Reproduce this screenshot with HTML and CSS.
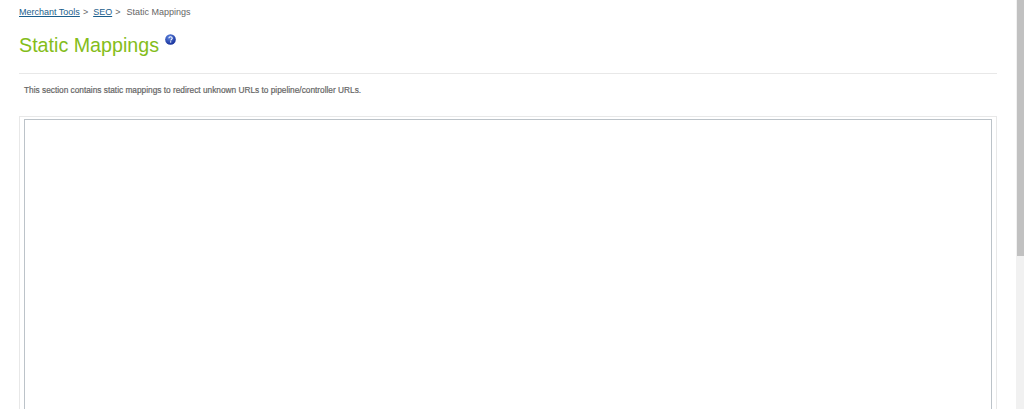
FILE: index.html
```html
<!DOCTYPE html>
<html lang="en">
<head>
<meta charset="utf-8">
<title>Static Mappings</title>
<link rel="stylesheet" href="styles.css">
</head>
<body>
<div class="page">
  <main class="content">
    <nav class="crumbs"><a href="#">Merchant Tools</a><span class="sep">&gt;</span><a href="#">SEO</a><span class="sep">&gt;</span><span class="current">Static Mappings</span></nav>
    <header class="head">
      <h1>Static Mappings</h1>
      <svg class="help" width="11" height="11" viewBox="0 0 12 12" aria-hidden="true">
        <defs><radialGradient id="g" cx="40%" cy="30%" r="70%"><stop offset="0" stop-color="#5f86e0"/><stop offset="1" stop-color="#16309a"/></radialGradient></defs>
        <circle cx="6" cy="6" r="5.8" fill="url(#g)"/>
        <path d="M4.2 4.6C4.3 3.5 5.1 3 6 3c1.1 0 1.9.6 1.9 1.5 0 1.3-1.6 1.3-1.6 2.6" fill="none" stroke="#fff" stroke-width="1.2"/>
        <rect x="5.5" y="8" width="1.3" height="1.3" fill="#fff"/>
      </svg>
    </header>
    <p class="intro">This section contains static mappings to redirect unknown URLs to pipeline/controller URLs.</p>
    <section class="frame-outer"><div class="frame-inner"></div></section>
  </main>
  <div class="scrollbar"><div class="thumb"></div></div>
</div>
</body>
</html>
```
FILE: styles.css
```css
html, body { margin: 0; padding: 0; height: 100%; overflow: hidden; background: #fff; }
body { font-family: "Liberation Sans", Arial, sans-serif; color: #666; }
.page { display: flex; height: 409px; overflow: hidden; }
.content { flex: 1; min-width: 0; padding: 0 19px; box-sizing: border-box; }
.crumbs { height: 13px; margin-top: 6px; font-size: 9px; line-height: 13px; color: #666; white-space: nowrap; }
.crumbs a { color: #1b5e8c; text-decoration: underline; }
.sep { margin: 0 5px 0 3px; font-size: 9px; }
.current { margin-left: 1px; }
.head { display: flex; align-items: flex-start; height: 54px; border-bottom: 1px solid #e8e8e8; }
h1 { margin: 14px 0 0; font-size: 19.7px; line-height: 24px; font-weight: normal; color: #84bd1a; }
.help { margin: 15px 0 0 6px; }
.intro { margin: 11px 0 0 5px; font-size: 8.3px; line-height: 11px; font-weight: normal; color: #666; -webkit-text-stroke: 0.2px #666; }
.frame-outer { margin-top: 20px; padding: 2px 4px 0; height: 400px; border: 1px solid #e8e8e8; box-sizing: border-box; }
.frame-inner { height: 100%; border: 1px solid #bcc3c9; box-sizing: border-box; }
.scrollbar { flex: none; width: 8px; background: #f1f1f1; padding-left: 1px; box-sizing: border-box; }
.thumb { height: 256px; background: #c1c1c1; }
```
